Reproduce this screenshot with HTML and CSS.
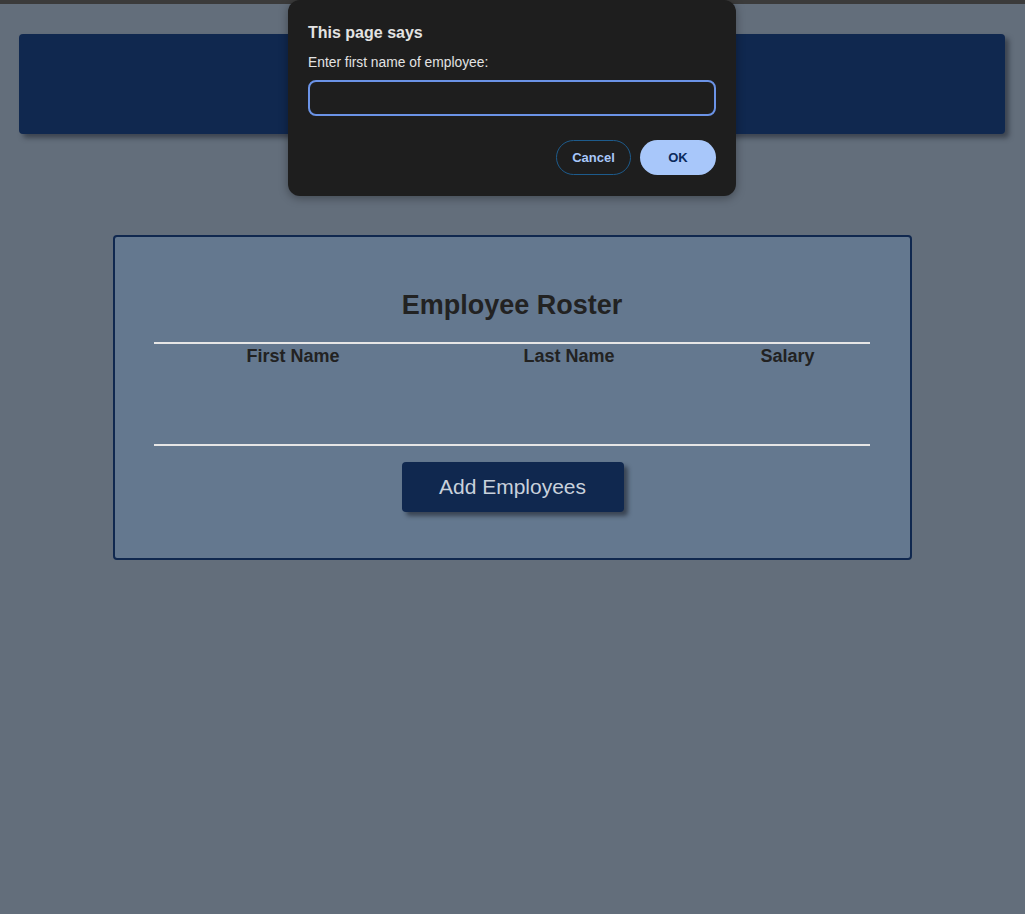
FILE: index.html
```html
<!DOCTYPE html>
<html>
<head>
<meta charset="utf-8">
<link rel="stylesheet" href="styles.css">
</head>
<body>
<div class="topstrip"></div>
<header class="banner"></header>
<main class="card">
  <h1 class="title">Employee Roster</h1>
  <div class="roster">
    <div class="cols">
      <div class="col">First Name</div>
      <div class="col">Last Name</div>
      <div class="col">Salary</div>
    </div>
  </div>
  <div class="actions">
    <button class="add">Add Employees</button>
  </div>
</main>
<div class="dialog">
  <div class="dlg-title">This page says</div>
  <div class="dlg-label">Enter first name of employee:</div>
  <div class="dlg-input"></div>
  <div class="dlg-buttons">
    <button class="btn-cancel">Cancel</button>
    <button class="btn-ok">OK</button>
  </div>
</div>
</body>
</html>
```
FILE: styles.css
```css
html, body {
  margin: 0;
  padding: 0;
}
body {
  background: #636e7b;
  font-family: "Liberation Sans", Arial, sans-serif;
  height: 914px;
  overflow: hidden;
}
.topstrip {
  height: 4px;
  background: #3b3b3b;
}
.banner {
  margin: 30px 20px 0 19px;
  height: 100px;
  background: #10284f;
  border-radius: 4px;
  box-shadow: 4px 4px 5px rgba(30, 35, 45, 0.55);
}
.card {
  box-sizing: border-box;
  margin: 101px 0 0 113px;
  width: 799px;
  height: 325px;
  background: #64788f;
  border: 2px solid #10284f;
  border-radius: 4px;
  padding: 0 40px 0 39px;
}
.title {
  margin: 52px 0 0;
  font-size: 27px;
  font-weight: bold;
  color: #222;
  text-align: center;
  line-height: 32px;
}
.roster {
  margin-top: 21px;
  height: 100px;
  border-top: 2px solid #e6e6e6;
  border-bottom: 2px solid #e6e6e6;
}
.cols {
  display: grid;
  grid-template-columns: 278px 274px 163px;
}
.col {
  text-align: center;
  font-weight: bold;
  font-size: 18px;
  color: #222;
  line-height: 24px;
}
.actions {
  display: flex;
  justify-content: center;
  margin-top: 16px;
}
.add {
  width: 222px;
  height: 50px;
  background: #10284f;
  color: #c9d1dc;
  border: none;
  border-radius: 4px;
  font-family: "Liberation Sans", Arial, sans-serif;
  font-size: 21px;
  box-shadow: 4px 4px 4px rgba(30, 35, 45, 0.6);
  padding: 0;
  margin-left: 1px;
}
.dialog {
  position: absolute;
  left: 288px;
  top: 0;
  width: 448px;
  height: 196px;
  box-sizing: border-box;
  background: #1e1e1e;
  border-radius: 12px;
  box-shadow: 0 2px 10px rgba(0,0,0,0.35);
  padding: 24px 20px 0 20px;
  font-family: "Liberation Sans", Arial, sans-serif;
}
.dlg-title {
  font-size: 16px;
  color: #e3e3e3;
  line-height: 18px;
  font-weight: bold;
}
.dlg-label {
  margin-top: 13px;
  font-size: 13.8px;
  color: #e3e3e3;
  line-height: 16px;
}
.dlg-input {
  margin-top: 9px;
  height: 36px;
  box-sizing: border-box;
  border: 2px solid #6b93e6;
  border-radius: 8px;
  background: #1e1e1e;
}
.dlg-buttons {
  display: flex;
  justify-content: flex-end;
  gap: 9px;
  margin-top: 24px;
}
.btn-cancel, .btn-ok {
  height: 35px;
  border-radius: 18px;
  font-family: "Liberation Sans", Arial, sans-serif;
  font-size: 13px;
  font-weight: bold;
  padding: 0;
}
.btn-cancel {
  width: 75px;
  background: transparent;
  border: 1px solid #1d5b8c;
  color: #a8c7fa;
}
.btn-ok {
  width: 76px;
  background: #a8c7fa;
  border: none;
  color: #0b2a5c;
}
```
